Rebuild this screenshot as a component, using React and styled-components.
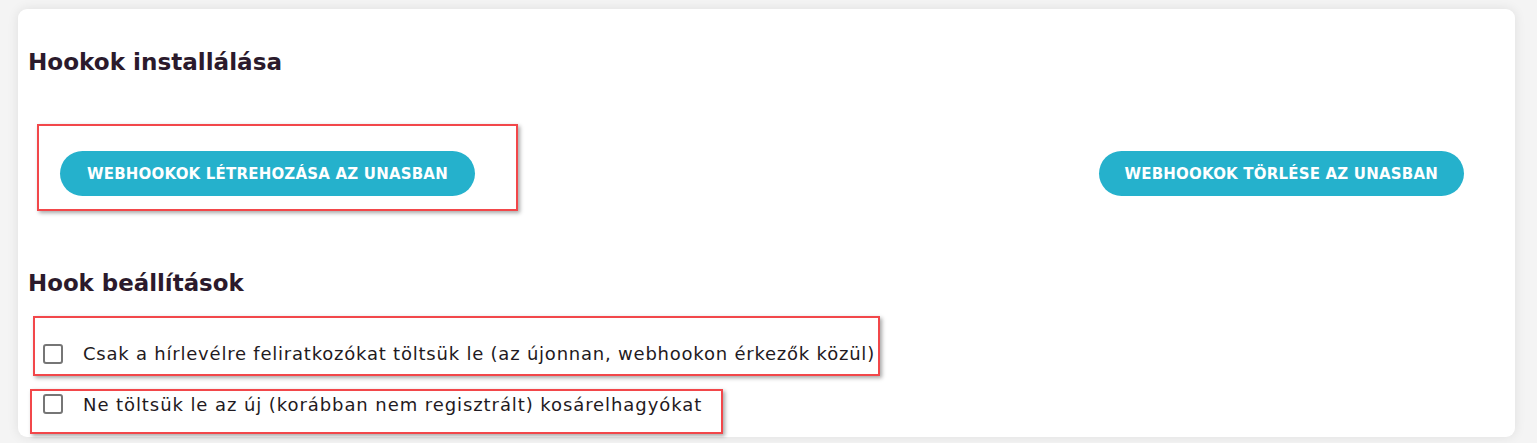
import React, { useState } from 'react';
import styled, { createGlobalStyle, css } from 'styled-components';

const GlobalStyle = createGlobalStyle`
* { box-sizing: border-box; }
body {
    margin: 0;
    background: #f4f4f4;
    font-family: "DejaVu Sans", "Noto Sans", sans-serif;
}
`

const Page = styled.div`
padding: 9px 22px 6px 18px;
`

const Card = styled.div`
background: #fff;
border-radius: 9px;
box-shadow: 0 0 12px rgba(0,0,0,0.09);
height: 428px;
padding: 37px 51px 0 10px;
`

const Title = styled.h2`
margin: 0;
font-family: "DejaVu Sans", sans-serif;
font-weight: 700;
font-size: ${props => props.second ? 22.9 : 23.1}px;
line-height: 32px;
color: #2b1a2c;
${props => props.second && css`
    margin-top: 56px;
`}
`

const Mark = styled.div`
border: 2px solid #f2474a;
box-shadow: 2px 2px 4px rgba(0,0,0,0.35);
width: ${props => props.w}px;
margin-left: ${props => props.left}px;
margin-top: ${props => props.top}px;
padding: ${props => props.pad};
`

const ButtonRow = styled.div`
display: flex;
justify-content: space-between;
align-items: flex-start;
margin-top: 46px;
`

const Button = styled.button`
height: 45px;
border: none;
border-radius: 23px;
background: #25b1cc;
color: #fff;
font-family: "DejaVu Sans", sans-serif;
font-weight: 700;
font-size: 15px;
letter-spacing: 0.2px;
text-transform: uppercase;
padding: 0 ${props => props.px}px;
white-space: nowrap;
cursor: pointer;
${props => props.right && css`
    margin-top: 27px;
`}
`

const CheckRow = styled.label`
display: flex;
align-items: center;
gap: 20px;
height: ${props => props.h}px;
cursor: pointer;
`

const Box = styled.span`
width: 20px;
height: 20px;
flex: none;
border: 2px solid #767676;
border-radius: 3px;
background: #fff;
display: flex;
align-items: center;
justify-content: center;
color: #fff;
font-size: 14px;
${props => props.on && css`
    background: #25b1cc;
    border-color: #25b1cc;
`}
`

const CheckText = styled.span`
font-family: "DejaVu Sans", sans-serif;
font-size: 18px;
color: #1f1a22;
letter-spacing: ${props => props.ls}px;
white-space: nowrap;
`

const Option = ({ label, h, ls }) => {
    const [on, setOn] = useState(false);
    return (
        <CheckRow h={h} onClick={() => setOn(!on)}>
            <Box on={on}>{on ? '✓' : ''}</Box>
            <CheckText ls={ls}>{label}</CheckText>
        </CheckRow>
    );
};

const App = () => {
    return (
        <>
            <GlobalStyle />
            <Page>
                <Card>
                    <Title>Hookok installálása</Title>
                    <ButtonRow>
                        <Mark w={481} left={9} top={0} pad="25px 0 13px 21px">
                            <Button px={27}>Webhookok létrehozása az Unasban</Button>
                        </Mark>
                        <Button right px={26}>Webhookok törlése az Unasban</Button>
                    </ButtonRow>
                    <Title second>Hook beállítások</Title>
                    <Mark w={847} left={5} top={17} pad="22px 0 7px 8px">
                        <Option h={27} ls={0.78} label="Csak a hírlevélre feliratkozókat töltsük le (az újonnan, webhookon érkezők közül)" />
                    </Mark>
                    <Mark w={693} left={2} top={13} pad="1px 0 16px 11px">
                        <Option h={24} ls={0.92} label="Ne töltsük le az új (korábban nem regisztrált) kosárelhagyókat" />
                    </Mark>
                </Card>
            </Page>
        </>
    );
};

export default App;
